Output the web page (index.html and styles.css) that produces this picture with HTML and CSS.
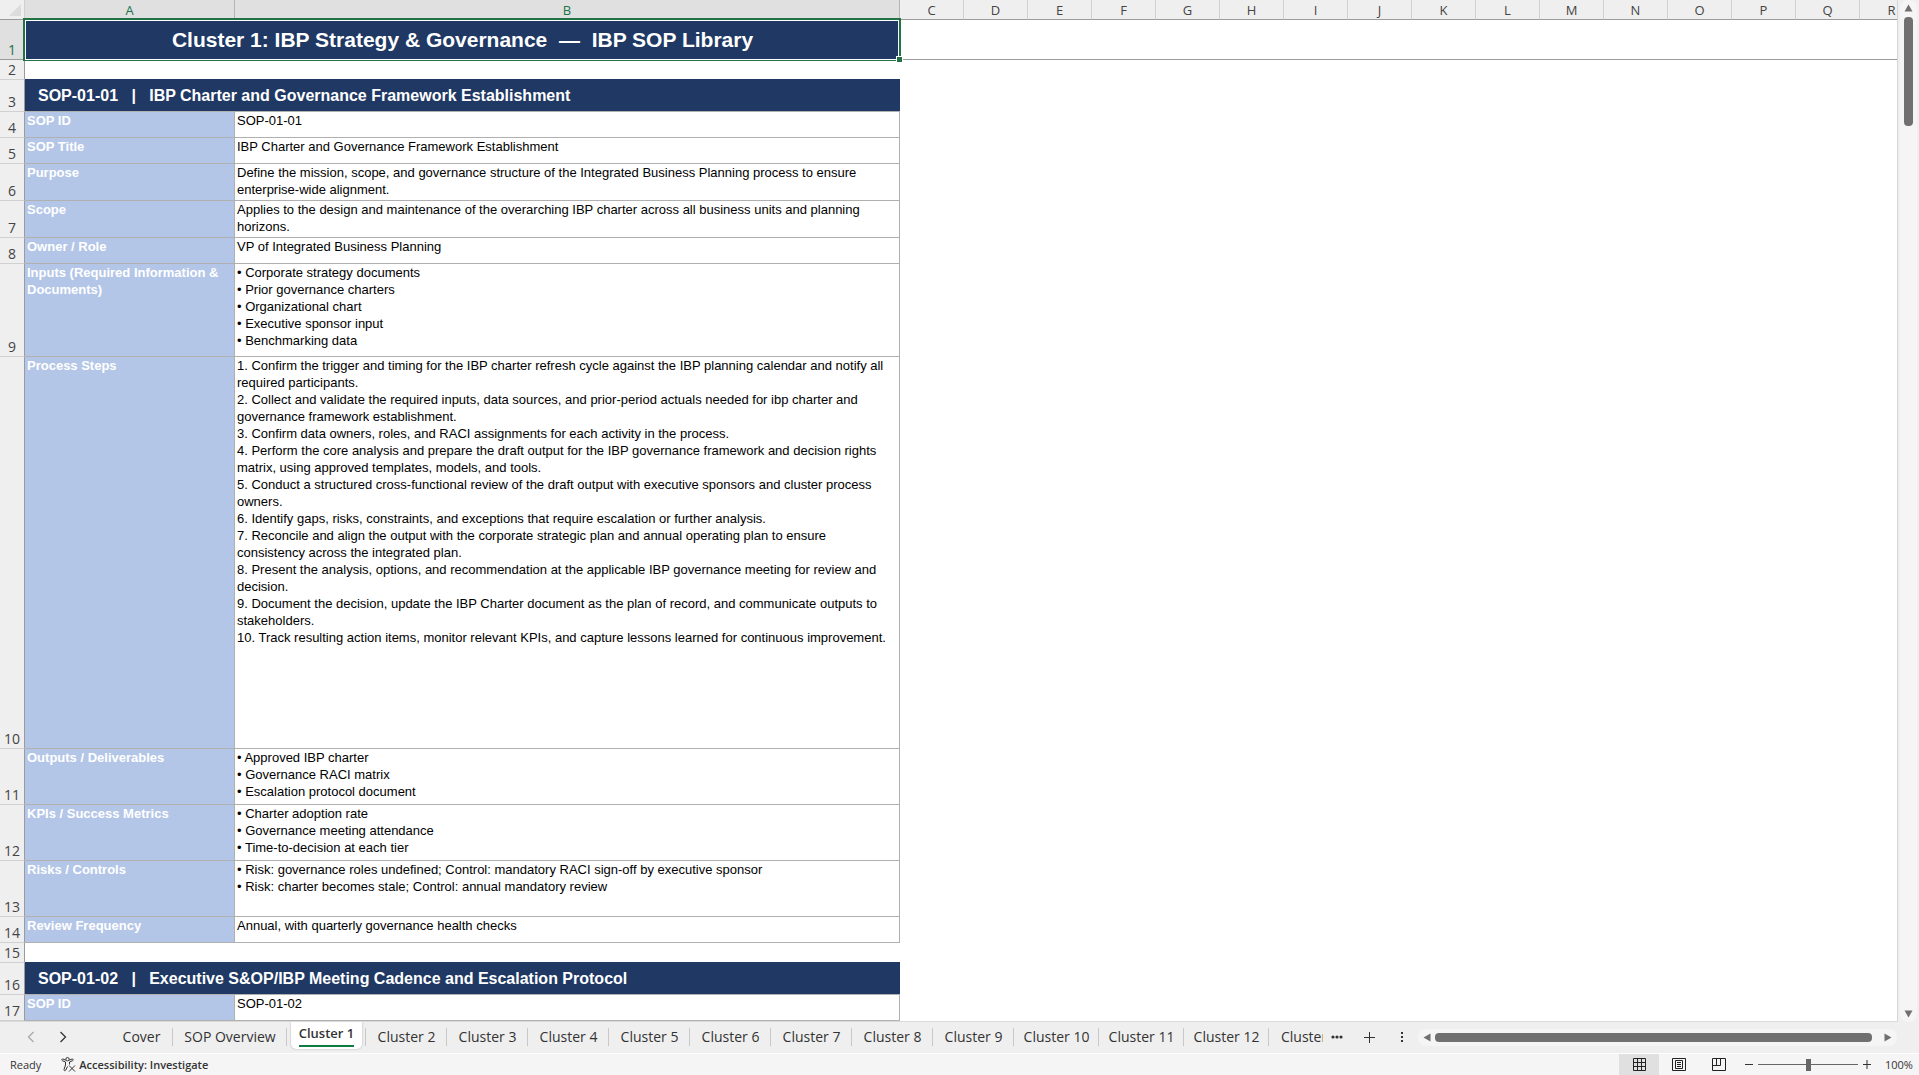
FILE: index.html
```html
<!DOCTYPE html>
<html lang="en">
<head>
<meta charset="utf-8">
<title>IBP SOP Library</title>
<link rel="stylesheet" href="styles.css">
</head>
<body>
<main class="workspace">
  <div class="sheet">
    <table class="grid">
      <colgroup>
        <col class="c-num"><col class="c-a"><col class="c-b">
        <col class="c-std" span="16">
      </colgroup>
      <thead>
        <tr>
          <th class="corner"><svg width="12" height="12" viewBox="0 0 12 12"><path d="M12 0V12H0Z" fill="#dcdcdc"/></svg></th>
          <th class="sel">A</th><th class="sel">B</th>
          <th>C</th><th>D</th><th>E</th><th>F</th><th>G</th><th>H</th><th>I</th><th>J</th>
          <th>K</th><th>L</th><th>M</th><th>N</th><th>O</th><th>P</th><th>Q</th><th class="last">R</th>
        </tr>
      </thead>
      <tbody>
        <tr class="h40 frozen"><th class="sel">1</th><td class="title" colspan="2">Cluster 1: IBP Strategy &amp; Governance&nbsp; —&nbsp; IBP SOP Library<span class="selection"></span><span class="handle"></span></td><td colspan="16"></td></tr>
        <tr class="h20"><th>2</th><td colspan="18"></td></tr>
        <tr class="h32"><th>3</th><td class="section" colspan="2">SOP-01-01&nbsp;&nbsp; |&nbsp;&nbsp; IBP Charter and Governance Framework Establishment</td><td colspan="16"></td></tr>
        <tr class="h26"><th>4</th><td class="label">SOP ID</td><td class="value">SOP-01-01</td><td colspan="16"></td></tr>
        <tr class="h26"><th>5</th><td class="label">SOP Title</td><td class="value">IBP Charter and Governance Framework Establishment</td><td colspan="16"></td></tr>
        <tr class="h37"><th>6</th><td class="label">Purpose</td><td class="value">Define the mission, scope, and governance structure of the Integrated Business Planning process to ensure<br>enterprise-wide alignment.</td><td colspan="16"></td></tr>
        <tr class="h37"><th>7</th><td class="label">Scope</td><td class="value">Applies to the design and maintenance of the overarching IBP charter across all business units and planning<br>horizons.</td><td colspan="16"></td></tr>
        <tr class="h26"><th>8</th><td class="label">Owner / Role</td><td class="value">VP of Integrated Business Planning</td><td colspan="16"></td></tr>
        <tr class="h93"><th>9</th><td class="label">Inputs (Required Information &amp;<br>Documents)</td><td class="value">• Corporate strategy documents<br>• Prior governance charters<br>• Organizational chart<br>• Executive sponsor input<br>• Benchmarking data</td><td colspan="16"></td></tr>
        <tr class="h392"><th>10</th><td class="label">Process Steps</td><td class="value">1. Confirm the trigger and timing for the IBP charter refresh cycle against the IBP planning calendar and notify all<br>required participants.<br>2. Collect and validate the required inputs, data sources, and prior-period actuals needed for ibp charter and<br>governance framework establishment.<br>3. Confirm data owners, roles, and RACI assignments for each activity in the process.<br>4. Perform the core analysis and prepare the draft output for the IBP governance framework and decision rights<br>matrix, using approved templates, models, and tools.<br>5. Conduct a structured cross-functional review of the draft output with executive sponsors and cluster process<br>owners.<br>6. Identify gaps, risks, constraints, and exceptions that require escalation or further analysis.<br>7. Reconcile and align the output with the corporate strategic plan and annual operating plan to ensure<br>consistency across the integrated plan.<br>8. Present the analysis, options, and recommendation at the applicable IBP governance meeting for review and<br>decision.<br>9. Document the decision, update the IBP Charter document as the plan of record, and communicate outputs to<br>stakeholders.<br>10. Track resulting action items, monitor relevant KPIs, and capture lessons learned for continuous improvement.</td><td colspan="16"></td></tr>
        <tr class="h56"><th>11</th><td class="label">Outputs / Deliverables</td><td class="value">• Approved IBP charter<br>• Governance RACI matrix<br>• Escalation protocol document</td><td colspan="16"></td></tr>
        <tr class="h56"><th>12</th><td class="label">KPIs / Success Metrics</td><td class="value">• Charter adoption rate<br>• Governance meeting attendance<br>• Time-to-decision at each tier</td><td colspan="16"></td></tr>
        <tr class="h56"><th>13</th><td class="label">Risks / Controls</td><td class="value">• Risk: governance roles undefined; Control: mandatory RACI sign-off by executive sponsor<br>• Risk: charter becomes stale; Control: annual mandatory review</td><td colspan="16"></td></tr>
        <tr class="h26"><th>14</th><td class="label">Review Frequency</td><td class="value">Annual, with quarterly governance health checks</td><td colspan="16"></td></tr>
        <tr class="h20"><th>15</th><td colspan="18"></td></tr>
        <tr class="h32"><th>16</th><td class="section" colspan="2">SOP-01-02&nbsp;&nbsp; |&nbsp;&nbsp; Executive S&amp;OP/IBP Meeting Cadence and Escalation Protocol</td><td colspan="16"></td></tr>
        <tr class="h26"><th>17</th><td class="label">SOP ID</td><td class="value">SOP-01-02</td><td colspan="16"></td></tr>
      </tbody>
    </table>
  </div>
  <div class="vscroll">
    <button class="arrow" aria-label="Scroll up"><svg width="9" height="8" viewBox="0 0 9 8"><path d="M4.500.5 8.500 7.500H.5Z" fill="#707070"/></svg></button>
    <div class="vthumb"></div>
    <button class="arrow" aria-label="Scroll down"><svg width="9" height="8" viewBox="0 0 9 8"><path d="M4.500 7.500.5.5H8.500Z" fill="#707070"/></svg></button>
  </div>
</main>

<nav class="tabbar" aria-label="Sheets">
  <div class="tab-nav">
    <button aria-label="Previous sheets"><svg width="8" height="12" viewBox="0 0 8 12"><path d="M6.500 1 1.500 6l5 5" fill="none" stroke="#a6a6a6" stroke-width="1.200"/></svg></button>
    <button aria-label="Next sheets"><svg width="8" height="12" viewBox="0 0 8 12"><path d="M1.500 1l5 5-5 5" fill="none" stroke="#333" stroke-width="1.300"/></svg></button>
  </div>
  <div class="tabs">
    <button class="tab cover">Cover</button>
    <button class="tab overview">SOP Overview</button>
    <button class="tab active"><span>Cluster 1</span></button>
    <button class="tab">Cluster 2</button>
    <button class="tab">Cluster 3</button>
    <button class="tab">Cluster 4</button>
    <button class="tab">Cluster 5</button>
    <button class="tab">Cluster 6</button>
    <button class="tab">Cluster 7</button>
    <button class="tab">Cluster 8</button>
    <button class="tab">Cluster 9</button>
    <button class="tab wide">Cluster 10</button>
    <button class="tab wide">Cluster 11</button>
    <button class="tab wide">Cluster 12</button>
    <button class="tab cut">Cluster 13</button>
  </div>
  <button class="tool more" aria-label="More sheets"><svg width="12" height="4" viewBox="0 0 12 4" fill="#333"><circle cx="2" cy="2" r="1.600"/><circle cx="6" cy="2" r="1.600"/><circle cx="10" cy="2" r="1.600"/></svg></button>
  <button class="tool add" aria-label="New sheet"><svg width="11" height="11" viewBox="0 0 11 11"><path d="M5.500 0V11M0 5.500H11" stroke="#333"/></svg></button>
  <button class="tool kebab" aria-label="Resize tabs"><svg width="2" height="10" viewBox="0 0 2 10" fill="#333"><path d="M0 0h2v2H0zM0 4h2v2H0zM0 8h2v2H0z"/></svg></button>
  <div class="hscroll">
    <button class="arrow" aria-label="Scroll left"><svg width="8" height="9" viewBox="0 0 8 9"><path d="M.5 4.500 7.500.5V8.500Z" fill="#707070"/></svg></button>
    <div class="hthumb"></div>
    <button class="arrow" aria-label="Scroll right"><svg width="8" height="9" viewBox="0 0 8 9"><path d="M7.500 4.500.5.5V8.500Z" fill="#707070"/></svg></button>
  </div>
</nav>

<footer class="status">
  <span class="ready">Ready</span>
  <button class="access"><svg width="15" height="15" viewBox="0 0 15 15" fill="none" stroke="#333"><circle cx="6.500" cy="2.200" r="1.700"/><path d="M4.800 3.200 2 2C.8 1.700.3 3.200 1.400 3.700L4.500 5v3L3 12.500c-.3 1.200 1.200 1.700 1.700.7L6.500 9.500M8.200 3.200 11 2c1.200-.3 1.700 1.200.6 1.700L8.500 5v2.500M8 8.500l6 6M14 8.500l-6 6"/></svg>Accessibility: Investigate</button>
  <div class="views">
    <button class="on" aria-label="Normal view"><svg width="13" height="13" viewBox="0 0 13 13" fill="none" stroke="#222"><path d="M.5.5h12v12H.5zM4.500.5v12M8.500.5v12M.5 4.500h12M.5 8.500h12"/></svg></button>
    <button aria-label="Page layout"><svg width="14" height="13" viewBox="0 0 14 13" fill="none" stroke="#222"><path d="M.5.5h13v12H.5zM3.500 2.500h7v8h-7zM5 4.500h4M5 6.500h4M5 8.500h4"/></svg></button>
    <button aria-label="Page break preview"><svg width="14" height="13" viewBox="0 0 14 13" fill="none" stroke="#222"><path d="M.5.5h13v12H.5zM4.500.5v7M.5 7.500h8v-7"/></svg></button>
  </div>
  <div class="zoom">
    <button aria-label="Zoom out"><svg width="8" height="9" viewBox="0 0 8 9"><path d="M0 4.500h8" stroke="#333"/></svg></button>
    <input type="range" min="0" max="100" value="50" aria-label="Zoom">
    <button aria-label="Zoom in"><svg width="8" height="9" viewBox="0 0 8 9"><path d="M0 4.500h8M4 0v9" stroke="#333"/></svg></button>
    <span class="pct">100%</span>
  </div>
</footer>
</body>
</html>
```
FILE: styles.css
```css
* { box-sizing: border-box; }

body {
  margin: 0;
  height: 100vh;
  display: flex;
  flex-direction: column;
  overflow: hidden;
  background: #efefef;
  color: #333;
  font-family: "Open Sans", "Noto Sans", sans-serif;
}

button {
  margin: 0;
  padding: 0;
  border: 0;
  background: none;
  color: inherit;
  font: inherit;
}

svg { display: block; }

/* Sheet area */
.workspace { flex: 1; min-height: 0; display: flex; }

.sheet {
  flex: 1;
  min-width: 0;
  overflow: hidden;
  background: #fff;
  border-right: 1px solid #d6d6d6;
  border-bottom: 1px solid #dadada;
}

.grid {
  width: 1924px;
  table-layout: fixed;
  border-collapse: separate;
  border-spacing: 0;
}

.c-num { width: 25px; }
.c-a { width: 210px; }
.c-b { width: 665px; }
.c-std { width: 64px; }

.grid th { padding: 0; font-weight: 400; background: #efefef; color: #444; }

.grid thead th {
  height: 20px;
  padding-top: 1px;
  font-size: 13px;
  line-height: 18px;
  border-bottom: 1px solid #9b9b9b;
  border-right: 1px solid #d0d0d0;
}

.grid thead .sel { background: #e0e0e0; color: #217346; border-right-color: #b4b4b4; }
.grid thead .corner { padding: 0 3px 3px 9px; vertical-align: bottom; }

.grid tbody th {
  padding-bottom: 1px;
  font-size: 14px;
  line-height: 17px;
  vertical-align: bottom;
  border-right: 1px solid #9b9b9b;
  border-bottom: 1px solid #d0d0d0;
}

.grid tbody .sel { background: #e0e0e0; color: #217346; }

.grid td { padding: 0; white-space: nowrap; font-family: "Liberation Sans", Arial, sans-serif; }
.grid .frozen th, .grid .frozen td { border-bottom: 1px solid #9b9b9b; }

.h20 { height: 20px; }
.h26 { height: 26px; }
.h32 { height: 32px; }
.h37 { height: 37px; }
.h40 { height: 40px; }
.h56 { height: 56px; }
.h93 { height: 93px; }
.h392 { height: 392px; }

.grid .title {
  position: relative;
  text-align: center;
  font-size: 21px;
  font-weight: 700;
  color: #fff;
  background: #203864;
}

.selection {
  position: absolute;
  inset: -2px -1px -2px -2px;
  border: 2px solid #217346;
  border-bottom-width: 1px;
  box-shadow: inset 0 0 0 1px #fff;
}

.handle {
  position: absolute;
  right: -2px;
  bottom: -3px;
  width: 5px;
  height: 5px;
  background: #217346;
  outline: 1px solid #fff;
}

.grid .section {
  padding-left: 13px;
  font-size: 16px;
  font-weight: 700;
  color: #fff;
  background: #203864;
  border-bottom: 1px solid #b0b0b0;
  box-shadow: 0 -1px #203864;
}

.grid .label, .grid .value {
  vertical-align: top;
  font-size: 13px;
  line-height: 17px;
  border-right: 1px solid #b0b0b0;
  border-bottom: 1px solid #b0b0b0;
}

.grid .label { padding-left: 2px; font-weight: 700; color: #fff; background: #b4c6e7; }
.grid .value { padding-left: 2px; color: #000; }

/* Scrollbars */
.vscroll {
  width: 17px;
  margin: 0 2px 0 2px;
  padding: 4px;
  display: flex;
  flex-direction: column;
  align-items: center;
  background: #f5f5f5;
  border-radius: 8px;
}

.vthumb { width: 9px; height: 109px; margin: 5px 0 auto; border-radius: 4px; background: #707070; }

.hscroll {
  flex: 1;
  height: 17px;
  margin: 7px 22px 0 1px;
  padding: 0 5px;
  display: flex;
  align-items: center;
  background: #f5f5f5;
  border-radius: 8px;
}

.hthumb { flex: 1; height: 9px; margin: 0 12px 0 4px; border-radius: 4px; background: #707070; }

/* Sheet tabs */
.tabbar { height: 32px; display: flex; align-items: flex-start; border-bottom: 1px solid #fff; }
.tab-nav { width: 110px; height: 30px; padding-left: 27px; display: flex; gap: 24px; align-items: center; }
.tabs { width: 1213px; display: flex; overflow: hidden; }

.tab {
  position: relative;
  flex: none;
  width: 81px;
  height: 30px;
  font-size: 14px;
  line-height: 30px;
  text-align: center;
  white-space: nowrap;
}

.tab::after {
  content: "";
  position: absolute;
  right: 0;
  top: 6px;
  width: 1px;
  height: 18px;
  background: #c8c8c8;
}

.cover { width: 63px; }
.overview { width: 114px; }
.wide { width: 85px; }
.cut { padding-left: 12px; text-align: left; }

.active { width: 79px; height: 27px; padding: 0 4px; font-size: 13px; font-weight: 600; line-height: 23px; }
.active span { display: block; height: 27px; background: #fff; border-radius: 0 0 5px 5px; box-shadow: 0 0 2px #aaa; }
.active span::after {
  content: "";
  display: block;
  height: 2px;
  margin: 0 8px;
  background: #107c41;
}

.tool { height: 30px; display: flex; align-items: center; justify-content: center; }
.more { width: 28px; }
.add { width: 36px; }
.kebab { width: 30px; }

/* Status bar */
.status {
  height: 21px;
  display: flex;
  align-items: center;
  background: #f5f5f5;
  font-size: 11px;
}

.ready { padding-left: 10px; }
.access { margin-left: 20px; display: flex; gap: 3px; align-items: center; font-weight: 600; }
.views { margin-left: auto; display: flex; }
.views button { width: 40px; height: 21px; display: flex; align-items: center; justify-content: center; }
.views .on { background: #e0e0e0; }

.zoom { display: flex; align-items: center; padding: 0 7px 0 6px; }
.zoom input { appearance: none; width: 100px; height: 12px; margin: 0 5px; background: linear-gradient(#666, #666) center / 100% 1px no-repeat; }
.zoom input::-webkit-slider-thumb { appearance: none; width: 5px; height: 12px; background: #666; }
.pct { width: 27px; margin-left: 14px; }
```
